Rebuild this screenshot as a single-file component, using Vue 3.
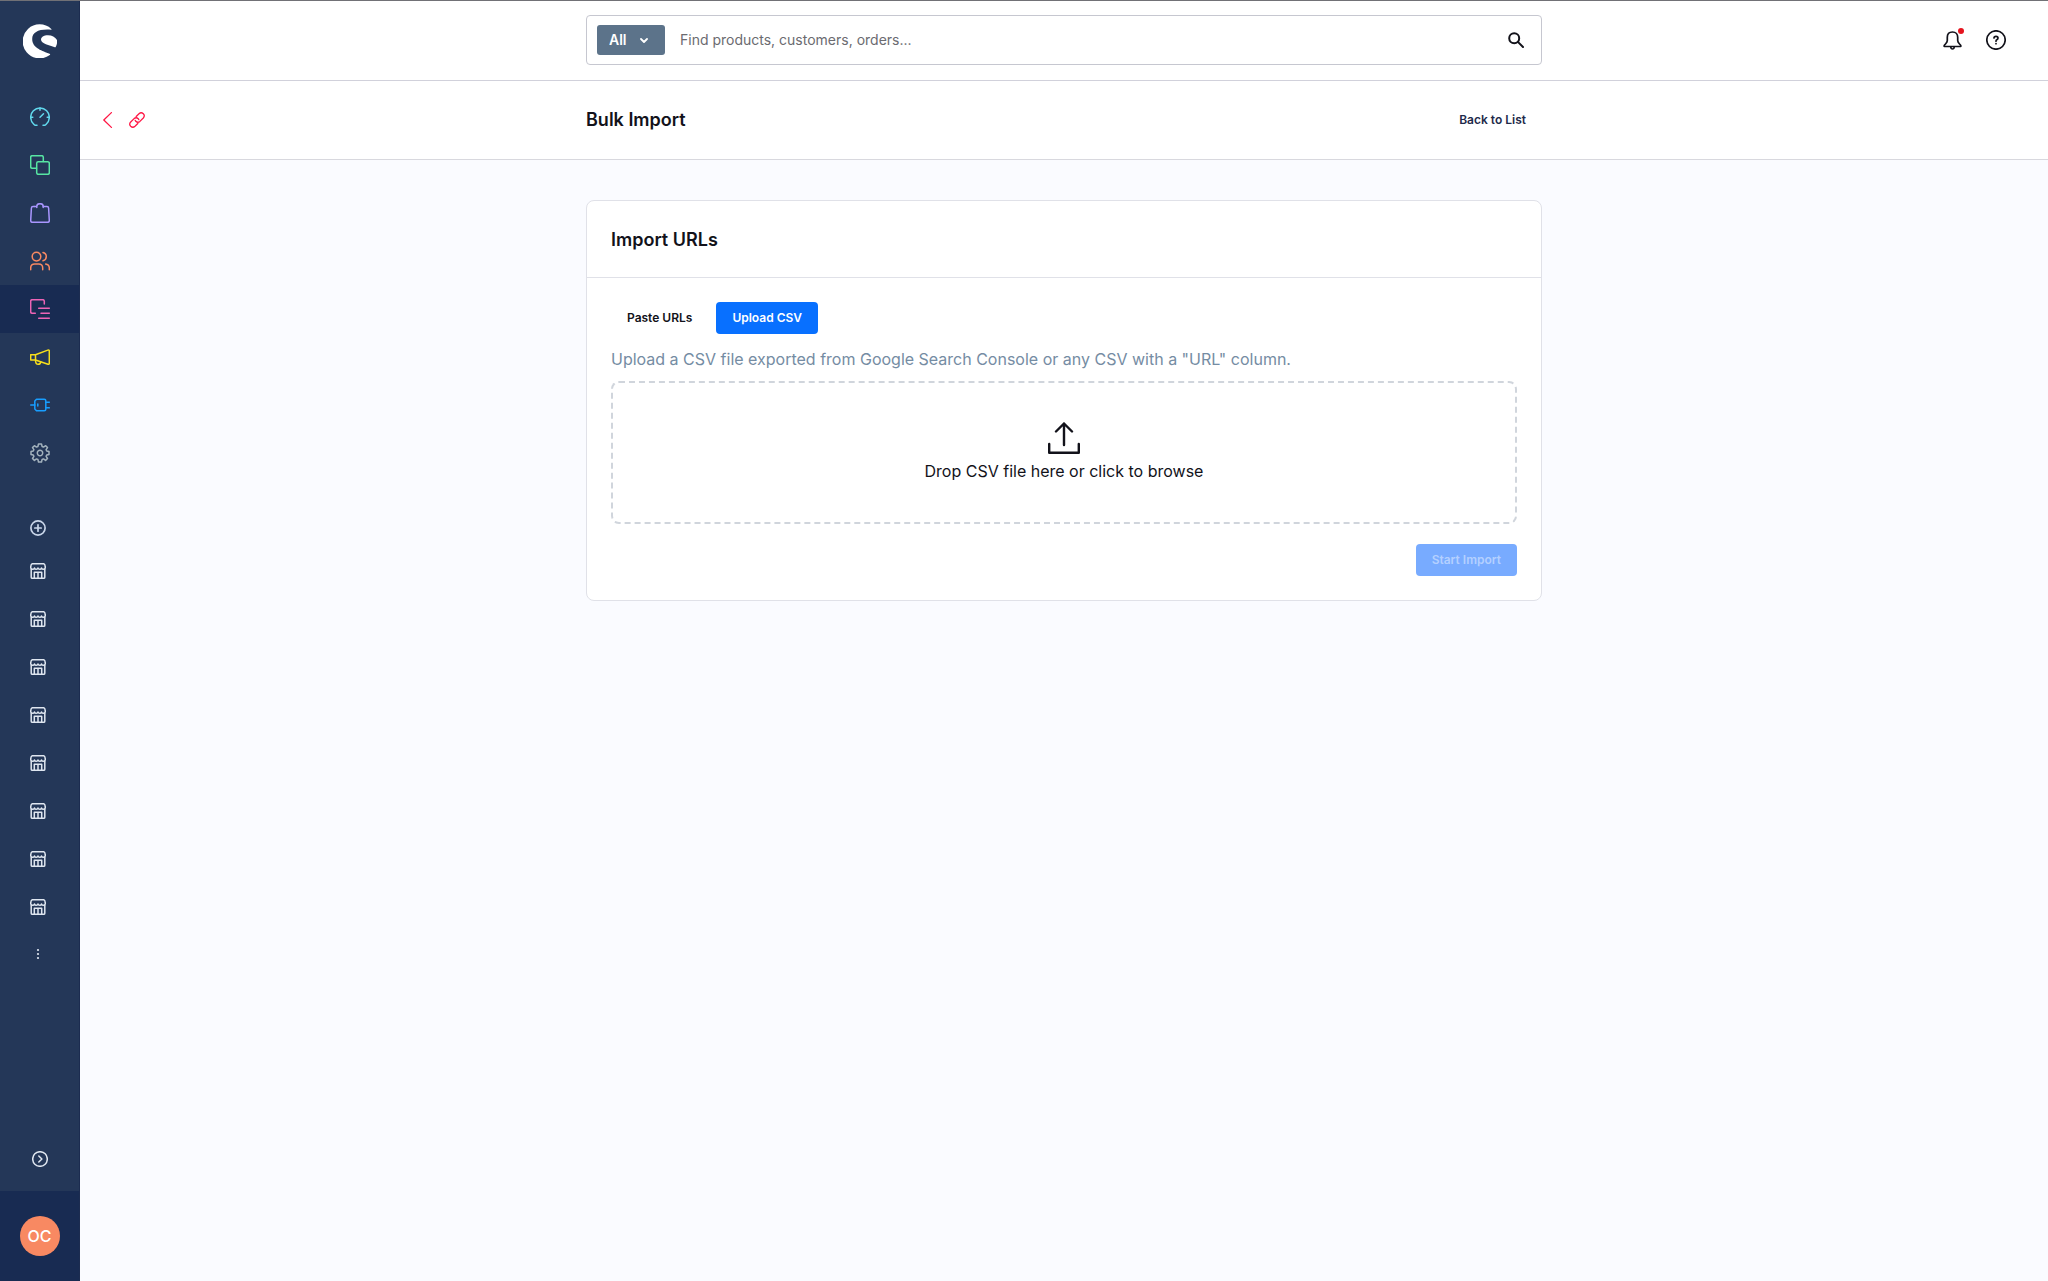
<template>
  <div class="admin">
    <aside class="sidebar">
      <a class="logo" href="#" aria-label="Home">
        <svg width="34" height="34" viewBox="0 0 34 34" fill="#fff">
          <path d="M28.3 5A17 17 0 1 0 26.8 31C27.5 30.4 27.2 30 26.5 29.7C20 27 9.2 24.4 9.2 15C9.2 8 16 4.8 28 5.7Q28.9 5.6 28.3 5Z" />
          <path d="M32.8 22.8Q34.5 19.5 34 16Q31 11.2 25 11.2C20.5 11.2 18 13.2 18 15.6C18 20 26.5 21.4 31.8 23.3Q32.6 23.5 32.8 22.8Z" />
        </svg>
      </a>

      <nav class="main-nav" aria-label="Main">
        <a
          v-for="item in navItems"
          :key="item.id"
          href="#"
          class="nav-link"
          :class="[item.id, { active: item.id === 'content' }]"
          :aria-label="item.label"
        >
          <svg width="20" height="20" viewBox="0 0 20 20" class="icon">
            <path v-for="d in item.paths" :key="d" :d="d" />
          </svg>
        </a>
      </nav>

      <nav class="channels" aria-label="Sales channels">
        <button class="channel-add" type="button" aria-label="Add sales channel">
          <svg width="16" height="16" viewBox="0 0 16 16" class="icon bold">
            <circle cx="8" cy="8" r="7.1" />
            <path d="M8 4.8V11.2M4.8 8H11.2" />
          </svg>
        </button>
        <a v-for="n in 8" :key="n" href="#" class="channel-link" :aria-label="'Storefront ' + n">
          <svg width="16" height="16" viewBox="0 0 16 16" class="icon">
            <path d="M2.3 .7H13.7Q15.3 1.5 15.3 4.5Q15.2 6.3 13.5 6.3Q12 6.3 11.5 4.9Q11 6.3 9.7 6.3Q8.4 6.3 8 4.9Q7.6 6.3 6.3 6.3Q5 6.3 4.5 4.9Q4 6.3 2.5 6.3Q.8 6.3 .7 4.5Q.7 1.5 2.3 .7Z" />
            <path d="M1.2 6.3V14.2Q1.2 15.3 2.4 15.3H13.6Q14.8 15.3 14.8 14.2V6.3" />
            <path d="M4.3 15.3V9.3H11.7V15.3M8 9.3V15.3" />
          </svg>
        </a>
        <button class="channel-more" type="button" aria-label="More">
          <svg width="16" height="16" viewBox="0 0 16 16" fill="#dfe6f0">
            <circle cx="8" cy="3" r="1.1" />
            <circle cx="8" cy="7" r="1.1" />
            <circle cx="8" cy="11" r="1.1" />
          </svg>
        </button>
      </nav>

      <button class="expand" type="button" aria-label="Expand menu">
        <svg width="16" height="16" viewBox="0 0 16 16" class="icon">
          <circle cx="8" cy="8" r="7.3" />
          <path d="M6.8 5L9.9 8L6.8 11" />
        </svg>
      </button>
      <div class="user">
        <button class="avatar" type="button">OC</button>
      </div>
    </aside>

    <div class="page">
      <header class="topbar">
        <div class="search">
          <div class="scope">
            <select v-model="scope" aria-label="Search in">
              <option>All</option>
              <option>Products</option>
              <option>Customers</option>
              <option>Orders</option>
            </select>
            <svg class="scope-arrow" width="8" height="6" viewBox="0 0 8 6">
              <path d="M1 1L4 4L7 1" />
            </svg>
          </div>
          <input v-model="query" type="text" aria-label="Search" placeholder="Find products, customers, orders..." />
          <button class="plain" type="button" aria-label="Search">
            <svg width="16" height="16" viewBox="0 0 16 16" class="icon search-icon">
              <circle cx="6.2" cy="6.2" r="5" />
              <path d="M9.9 9.9L15 15" />
            </svg>
          </button>
        </div>
        <div class="actions">
          <button class="plain bell" type="button" aria-label="Notifications">
            <svg width="20" height="20" viewBox="0 0 20 20" class="icon bold">
              <path d="M10.5 2C7.1 2 5.3 4.3 5.3 7.3V10.6Q5.3 12.2 3.5 14Q1.3 16.2 2.5 16.5H18.5Q19.7 16.2 17.5 14Q15.7 12.2 15.7 10.6V7.3C15.7 4.3 13.9 2 10.5 2Z" />
              <path d="M8.8 17Q9 19 10.5 19T12.2 17" />
            </svg>
            <span class="dot"></span>
          </button>
          <button class="plain" type="button" aria-label="Help">
            <svg width="20" height="20" viewBox="0 0 20 20" class="icon bold">
              <circle cx="10" cy="10" r="9.2" />
              <path d="M8 8Q8 6.3 10 6.3T12 8Q12 9.2 10.8 9.8Q10 10.2 10 11.2M10 13.5V13.7" />
            </svg>
          </button>
        </div>
      </header>

      <div class="smartbar">
        <div class="smartbar-nav">
          <a href="#" aria-label="Back">
            <svg width="10" height="16" viewBox="0 0 10 16" class="icon thin">
              <path d="M8.4 .6L.8 8L8.4 15.4" />
            </svg>
          </a>
          <a href="#" aria-label="Copy link">
            <svg width="16" height="16" viewBox="0 0 16 16" class="icon thin">
              <path d="M7.2 4.5L10 1.7Q12.2 -.3 14.3 1.7Q16.3 3.8 14.3 6L10.9 9.4Q8.8 11.2 6.8 9.3L6.2 8.4" />
              <path d="M8.8 11.5L6 14.3Q3.8 16.3 1.7 14.3Q-.3 12.2 1.7 10L5.1 6.6Q7.2 4.8 9.2 6.7L9.8 7.6" />
            </svg>
          </a>
        </div>
        <div class="smartbar-content">
          <h1>Bulk Import</h1>
          <button class="btn back" type="button">Back to List</button>
        </div>
      </div>

      <main class="content">
        <section class="card">
          <h2 class="card-title">Import URLs</h2>
          <div class="card-body">
            <div class="tabs">
              <button
                v-for="tab in tabs"
                :key="tab.id"
                type="button"
                class="btn"
                :class="{ primary: mode === tab.id }"
                :aria-pressed="mode === tab.id"
                @click="mode = tab.id"
              >
                {{ tab.label }}
              </button>
            </div>

            <template v-if="mode === 'csv'">
              <p class="hint">Upload a CSV file exported from Google Search Console or any CSV with a "URL" column.</p>
              <label class="dropzone" @dragover.prevent @drop.prevent="onDrop">
                <input type="file" accept=".csv" @change="onSelect" />
                <svg width="32" height="32" viewBox="0 0 32 32">
                  <path d="M16 23V1.5M8 9.5L16 1.5L24 9.5" />
                  <path d="M1.2 22V30.8H30.8V22" />
                </svg>
                <span>{{ fileName || 'Drop CSV file here or click to browse' }}</span>
              </label>
            </template>
            <textarea v-else v-model="urls" class="urls" aria-label="URLs"></textarea>

            <div class="card-actions">
              <button class="btn primary" type="button" :disabled="!canImport">Start Import</button>
            </div>
          </div>
        </section>
      </main>
    </div>
  </div>
</template>

<script setup>
import { ref, computed } from 'vue'

const scope = ref('All')
const query = ref('')
const mode = ref('csv')
const fileName = ref('')
const urls = ref('')

const tabs = [
  { id: 'paste', label: 'Paste URLs' },
  { id: 'csv', label: 'Upload CSV' }
]

const navItems = [
  {
    id: 'dashboard',
    label: 'Dashboard',
    paths: [
      'M7 18.2H5.2Q4.5 18 3.6 17A9.3 9.3 0 1 1 16.4 17Q15.5 18 14.8 18.2H13',
      'M10 1V3.2M.9 10.3H2.8M17.2 10.3H19.1M10 10.3L13.5 6.8'
    ]
  },
  {
    id: 'catalogue',
    label: 'Catalogues',
    paths: [
      'M6.5 13.3H2.2Q.7 13.3 .7 11.8V2.2Q.7 .7 2.2 .7H11.8Q13.3 .7 13.3 2.2V6.5',
      'M8.2 6.7H17.8Q19.3 6.7 19.3 8.2V17.8Q19.3 19.3 17.8 19.3H8.2Q6.7 19.3 6.7 17.8V8.2Q6.7 6.7 8.2 6.7Z'
    ]
  },
  {
    id: 'orders',
    label: 'Orders',
    paths: [
      'M4.2 3.5H3Q1.5 3.5 1.4 5L.7 17.5Q.7 19.3 2.4 19.3H17.6Q19.3 19.3 19.3 17.5L18.6 5Q18.5 3.5 17 3.5H13.2',
      'M4.2 3.5H6.8M6.8 4.5V3.2Q6.8 .7 10 .7T13.2 3.2V4.5'
    ]
  },
  {
    id: 'customers',
    label: 'Customers',
    paths: [
      'M6.5 1.3A4.3 4.3 0 1 1 6.5 9.9A4.3 4.3 0 1 1 6.5 1.3Z',
      'M.7 18.7V17Q.7 13 4.7 13H8.7Q12.7 13 12.7 17V18.7',
      'M13 1.5Q16.3 2.3 16.3 5.6T13 9.7M15.7 13.1Q19.3 13.8 19.3 17V18.7'
    ]
  },
  {
    id: 'content',
    label: 'Content',
    paths: [
      'M5.3 14.3H2.2Q.7 14.3 .7 12.8V2.2Q.7 .7 2.2 .7H12.8Q14.3 .7 14.3 2.2V5',
      'M8.7 9.2H19.3M11 14.2H19.3M8.7 19.2H19.3'
    ]
  },
  {
    id: 'marketing',
    label: 'Marketing',
    paths: [
      'M.7 7.7H5.5V13H.7ZM5.5 7.7L17.8 3.1Q19.3 2.7 19.3 4V16.3Q19.3 17.5 18 17.2L5.5 13',
      'M5.5 13.2Q5.5 17.3 8.2 17.3Q10.3 17.3 10.8 15'
    ]
  },
  {
    id: 'extensions',
    label: 'Extensions',
    paths: [
      'M6.5 4.3H14.3Q15.8 4.3 15.8 5.8V14.2Q15.8 15.7 14.3 15.7H6.5L4.8 14V6Z',
      'M.7 10H4.8M15.8 7.2H19.3M15.8 12.8H19.3M7.8 9V11'
    ]
  },
  {
    id: 'settings',
    label: 'Settings',
    paths: [
      'M8.5 1H11.5L12.1 3.5L13.5 4.1L15.7 2.7L17.5 4.6L16.1 6.6L16.7 8L19 8.6V11.4L16.7 12L16.1 13.4L17.5 15.5L15.6 17.4L13.5 15.9L12.1 16.5L11.5 19H8.5L7.9 16.5L6.5 15.9L4.4 17.4L2.5 15.5L3.9 13.4L3.3 12L1 11.4V8.6L3.3 8L3.9 6.6L2.5 4.6L4.4 2.7L6.5 4.1L7.9 3.5Z',
      'M10 7.3A2.7 2.7 0 1 1 10 12.7A2.7 2.7 0 1 1 10 7.3Z'
    ]
  }
]

const canImport = computed(() => {
  return mode.value === 'csv' ? fileName.value !== '' : urls.value.trim() !== ''
})

function onSelect(event) {
  fileName.value = event.target.files[0]?.name || ''
}

function onDrop(event) {
  fileName.value = event.dataTransfer.files[0]?.name || ''
}
</script>

<style>
body {
  margin: 0;
  background: #fafbff;
}
</style>

<style scoped>
.admin {
  display: flex;
  min-height: 100vh;
  box-sizing: border-box;
  border-top: 1px solid #717176;
  font-family: Inter, "Liberation Sans", sans-serif;
  color: #12121a;
}

.admin * {
  box-sizing: border-box;
}

button,
select,
input,
textarea {
  font-family: inherit;
}

.icon {
  display: block;
  fill: none;
  stroke: currentColor;
  stroke-width: 1.5;
  stroke-linecap: round;
  stroke-linejoin: round;
}

.icon.thin {
  stroke-width: 1.3;
}

.icon.bold {
  stroke-width: 1.7;
}

/* Sidebar */
.sidebar {
  display: flex;
  flex-direction: column;
  flex-shrink: 0;
  width: 80px;
  background: #243758;
  border-right: 1px solid #1c2c50;
}

.logo {
  display: flex;
  justify-content: center;
  height: 92px;
  padding-top: 23px;
}

.nav-link {
  display: flex;
  align-items: center;
  justify-content: center;
  height: 48px;
}

.nav-link.active {
  background: #182b52;
}

.dashboard { color: #61d8ec; }
.catalogue { color: #57e5a3; }
.orders { color: #a996ff; }
.customers { color: #f88962; }
.content.nav-link { color: #ed64b6; }
.marketing { color: #f7de1c; }
.extensions { color: #189eff; }
.settings { color: #a3b2bd; }

.channels {
  display: flex;
  flex-direction: column;
  padding-top: 32px;
}

.channel-link,
.channel-add,
.channel-more,
.expand {
  display: flex;
  align-items: center;
  height: 48px;
  padding: 0 0 0 30px;
  border: 0;
  background: none;
  color: #dfe6f0;
  cursor: pointer;
}

.channel-add {
  height: 38px;
  color: #c9d6ea;
}

.expand {
  margin-top: auto;
  height: 64px;
  padding-left: 32px;
}

.user {
  display: flex;
  align-items: center;
  justify-content: center;
  height: 90px;
  background: #182b52;
}

.avatar {
  width: 40px;
  height: 40px;
  padding: 0;
  border: 0;
  border-radius: 50%;
  background: #f88962;
  color: #fff;
  font-size: 16px;
  font-weight: 500;
}

/* Header */
.page {
  flex: 1;
  min-width: 0;
}

.topbar {
  display: grid;
  grid-template-columns: 1fr minmax(0, 956px) 1fr;
  align-items: center;
  height: 80px;
  padding-bottom: 2px;
  background: #fff;
  border-bottom: 1px solid #d1d1db;
}

.search {
  grid-column: 2;
  display: flex;
  align-items: center;
  height: 50px;
  padding: 0 17px 0 10px;
  border: 1px solid #c6c7d0;
  border-radius: 4px;
}

.scope {
  position: relative;
  width: 68px;
  height: 30px;
}

.scope select {
  width: 100%;
  height: 100%;
  padding: 0 24px 0 12px;
  border: 0;
  border-radius: 3px;
  appearance: none;
  background: #5c738a;
  color: #fff;
  font-size: 14px;
  font-weight: 600;
}

.scope-arrow {
  position: absolute;
  top: 13px;
  right: 17px;
  fill: none;
  stroke: #fff;
  stroke-width: 1.8;
  stroke-linecap: round;
  stroke-linejoin: round;
  pointer-events: none;
}

.search input {
  flex: 1;
  min-width: 0;
  height: 40px;
  padding: 0 15px;
  border: 0;
  outline: none;
  background: none;
  color: #12121a;
  font-size: 14px;
}

.search input::placeholder {
  color: #6b6b70;
  opacity: 1;
}

.plain {
  display: flex;
  padding: 0;
  border: 0;
  background: none;
  color: #12121a;
  cursor: pointer;
}

.search-icon {
  stroke-width: 2;
}

.actions {
  display: flex;
  justify-content: flex-end;
  gap: 24px;
  padding-right: 42px;
}

.bell {
  position: relative;
}

.dot {
  position: absolute;
  top: -2px;
  right: -2px;
  width: 6px;
  height: 6px;
  border-radius: 50%;
  background: #e5141e;
}

.smartbar {
  display: grid;
  grid-template-columns: 1fr minmax(0, 956px) 1fr;
  align-items: center;
  height: 79px;
  background: #fff;
  border-bottom: 1px solid #d8d8de;
}

.smartbar-nav {
  display: flex;
  gap: 16px;
  padding-left: 23px;
}

.smartbar-nav a {
  color: #ff1745;
}

.smartbar-content {
  display: flex;
  align-items: center;
  justify-content: space-between;
}

h1,
h2 {
  margin: 0;
  font-size: 18px;
  line-height: 28px;
  font-weight: 600;
}

.btn {
  height: 32px;
  padding: 0 16px 2px;
  border: 0;
  border-radius: 4px;
  background: none;
  color: #12121a;
  font-size: 12px;
  font-weight: 600;
  cursor: pointer;
}

.btn.back {
  color: #1e2a4a;
}

.btn.primary {
  background: #0870ff;
  color: #fff;
}

.btn.primary:disabled {
  background: #78abff;
  color: #b4d0ff;
  cursor: default;
}

/* Import card */
.card {
  max-width: 956px;
  margin: 40px auto;
  border: 1px solid #e0e1e8;
  border-radius: 8px;
  background: #fff;
}

.card-title {
  padding: 25px 24px 23px;
  border-bottom: 1px solid #e0e1e8;
}

.card-body {
  padding: 24px;
}

.tabs {
  display: flex;
  gap: 8px;
}

.hint {
  margin: 13px 0 10px;
  color: #758ca3;
  font-size: 16px;
  line-height: 24px;
}

.dropzone {
  position: relative;
  display: flex;
  flex-direction: column;
  align-items: center;
  justify-content: center;
  gap: 5px;
  height: 143px;
  border: 2px dashed #d0d5dc;
  border-radius: 8px;
  font-size: 16px;
  line-height: 24px;
  cursor: pointer;
}

.dropzone input {
  position: absolute;
  width: 1px;
  height: 1px;
  opacity: 0;
}

.dropzone svg {
  fill: none;
  stroke: #12121a;
  stroke-width: 2.4;
  stroke-linecap: round;
  stroke-linejoin: round;
}

.urls {
  display: block;
  width: 100%;
  min-height: 180px;
  margin-top: 16px;
  padding: 12px;
  border: 1px solid #d1d1db;
  border-radius: 4px;
  font-size: 16px;
}

.card-actions {
  display: flex;
  justify-content: flex-end;
  margin-top: 20px;
}
</style>
